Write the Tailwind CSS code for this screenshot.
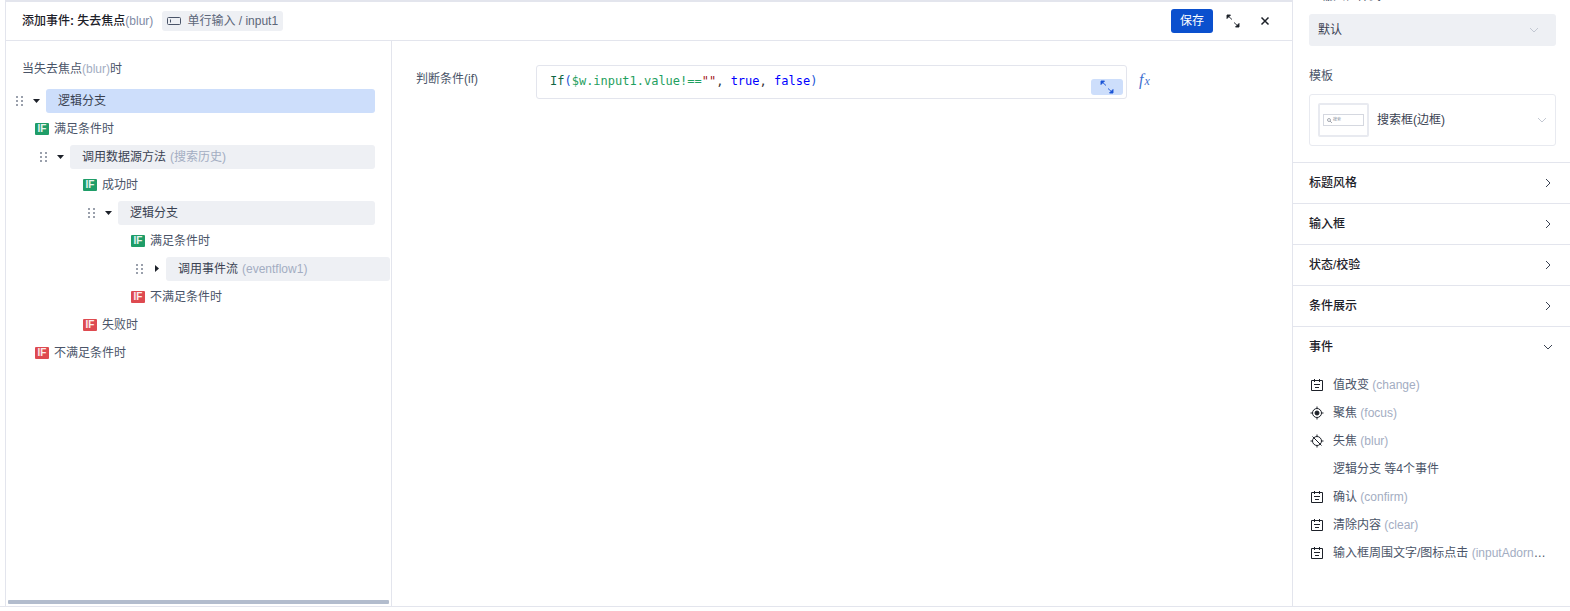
<!DOCTYPE html>
<html lang="zh">
<head>
<meta charset="utf-8">
<title>添加事件</title>
<script src="https://cdn.jsdelivr.net/npm/@tailwindcss/browser@4"></script>
</head>
<body class="bg-white overflow-hidden font-['Liberation_Sans','Noto_Sans_CJK_SC',sans-serif] text-[12px] text-[#1d2129]">
<div class="w-[1570px] h-[611px] flex flex-col overflow-hidden">
  <div class="flex-1 flex min-h-0 border-b border-[#e3e5ed]">
    <!-- Event editor -->
    <div class="w-[1293px] pl-[5px] shrink-0">
      <div class="h-full flex flex-col border-x border-t-2 border-[#e3e5ed]">
        <div class="h-[39px] shrink-0 flex items-center pl-[16px] pr-[20px] border-b border-[#e3e5ed]">
          <span class="font-medium text-[#1d2129]">添加事件<span class="font-bold">:</span> 失去焦点<span class="font-normal text-[#7f8ba5]">(blur)</span></span>
          <span class="ml-[9px] h-[20px] px-[5px] rounded-[3px] bg-[#eef0f4] flex items-center gap-[6px] text-[#5c6679]">
            <svg width="14" height="14" viewBox="0 0 14 14" fill="none" stroke="#4a5468"><rect x="0.5" y="3.5" width="13" height="7" rx="1"/><path d="M3.5 5.5v3"/></svg>
            单行输入 / input1
          </span>
          <button class="ml-auto w-[42px] h-[24px] rounded-[3px] bg-[#0b50ce] text-white">保存</button>
          <svg class="ml-[13px]" width="14" height="14" viewBox="0 0 14 14" fill="none" stroke="#1d2129" stroke-width="0.9"><path d="M1 1l5 4.500M1 1h3.500L1 4.500zM13 13L8 8.500M13 13H9.500L13 9.500z" fill="#1d2129"/></svg>
          <svg class="ml-[18px]" width="14" height="14" viewBox="0 0 14 14" fill="none" stroke="#1d2129" stroke-width="1.500"><path d="M3.500 3.500l7 7M10.500 3.500l-7 7"/></svg>
        </div>
        <div class="flex-1 flex min-h-0">
          <!-- Action tree -->
          <div class="w-[386px] shrink-0 border-r border-[#e3e5ed] relative">
            <div class="h-[46px] pl-[16px] pt-[10px] flex items-center text-[#4a5468]">当失去焦点<span class="text-[#a3adc2]">(blur)</span>时</div>
            <div class="flex flex-col">
              <div class="h-[28px] flex items-center pl-[10px]">
                <svg width="8" height="12" viewBox="0 0 8 12" fill="#9aa0ac"><rect x="0" y="1" width="2" height="2"/><rect x="5" y="1" width="2" height="2"/><rect x="0" y="5" width="2" height="2"/><rect x="5" y="5" width="2" height="2"/><rect x="0" y="9" width="2" height="2"/><rect x="5" y="9" width="2" height="2"/></svg>
                <svg class="ml-[8px]" width="10" height="10" viewBox="0 0 10 10" fill="#1d2129"><path d="M1 3h7L4.500 7z"/></svg>
                <div class="ml-[4px] w-[329px] h-[24px] rounded-[3px] bg-[#cddefb] pl-[12px] flex items-center text-[#3a4252]">逻辑分支</div>
              </div>
              <div class="h-[28px] flex items-center pl-[29px] gap-[5px] text-[#4a5468]"><span class="w-[14px] h-[12px] rounded-[1px] bg-[#1f9d68] text-white/90 text-[10px] leading-[12px] font-bold text-center">IF</span>满足条件时</div>
              <div class="h-[28px] flex items-center pl-[34px]">
                <svg width="8" height="12" viewBox="0 0 8 12" fill="#9aa0ac"><rect x="0" y="1" width="2" height="2"/><rect x="5" y="1" width="2" height="2"/><rect x="0" y="5" width="2" height="2"/><rect x="5" y="5" width="2" height="2"/><rect x="0" y="9" width="2" height="2"/><rect x="5" y="9" width="2" height="2"/></svg>
                <svg class="ml-[8px]" width="10" height="10" viewBox="0 0 10 10" fill="#1d2129"><path d="M1 3h7L4.500 7z"/></svg>
                <div class="ml-[4px] w-[305px] h-[24px] rounded-[3px] bg-[#eef0f4] pl-[12px] flex items-center text-[#3a4252]">调用数据源方法<span class="ml-[4px] text-[#a3adc2]">(搜索历史)</span></div>
              </div>
              <div class="h-[28px] flex items-center pl-[77px] gap-[5px] text-[#4a5468]"><span class="w-[14px] h-[12px] rounded-[1px] bg-[#1f9d68] text-white/90 text-[10px] leading-[12px] font-bold text-center">IF</span>成功时</div>
              <div class="h-[28px] flex items-center pl-[82px]">
                <svg width="8" height="12" viewBox="0 0 8 12" fill="#9aa0ac"><rect x="0" y="1" width="2" height="2"/><rect x="5" y="1" width="2" height="2"/><rect x="0" y="5" width="2" height="2"/><rect x="5" y="5" width="2" height="2"/><rect x="0" y="9" width="2" height="2"/><rect x="5" y="9" width="2" height="2"/></svg>
                <svg class="ml-[8px]" width="10" height="10" viewBox="0 0 10 10" fill="#1d2129"><path d="M1 3h7L4.500 7z"/></svg>
                <div class="ml-[4px] w-[257px] h-[24px] rounded-[3px] bg-[#eef0f4] pl-[12px] flex items-center text-[#3a4252]">逻辑分支</div>
              </div>
              <div class="h-[28px] flex items-center pl-[125px] gap-[5px] text-[#4a5468]"><span class="w-[14px] h-[12px] rounded-[1px] bg-[#1f9d68] text-white/90 text-[10px] leading-[12px] font-bold text-center">IF</span>满足条件时</div>
              <div class="h-[28px] flex items-center pl-[130px]">
                <svg width="8" height="12" viewBox="0 0 8 12" fill="#9aa0ac"><rect x="0" y="1" width="2" height="2"/><rect x="5" y="1" width="2" height="2"/><rect x="0" y="5" width="2" height="2"/><rect x="5" y="5" width="2" height="2"/><rect x="0" y="9" width="2" height="2"/><rect x="5" y="9" width="2" height="2"/></svg>
                <svg class="ml-[8px]" width="10" height="10" viewBox="0 0 10 10" fill="#1d2129"><path d="M3 1v7l4-3.500z"/></svg>
                <div class="ml-[4px] w-[224px] h-[24px] rounded-[3px] bg-[#eef0f4] pl-[12px] flex items-center text-[#3a4252]">调用事件流<span class="ml-[4px] text-[#a3adc2]">(eventflow1)</span></div>
              </div>
              <div class="h-[28px] flex items-center pl-[125px] gap-[5px] text-[#4a5468]"><span class="w-[14px] h-[12px] rounded-[1px] bg-[#de4a50] text-white/90 text-[10px] leading-[12px] font-bold text-center">IF</span>不满足条件时</div>
              <div class="h-[28px] flex items-center pl-[77px] gap-[5px] text-[#4a5468]"><span class="w-[14px] h-[12px] rounded-[1px] bg-[#de4a50] text-white/90 text-[10px] leading-[12px] font-bold text-center">IF</span>失败时</div>
              <div class="h-[28px] flex items-center pl-[29px] gap-[5px] text-[#4a5468]"><span class="w-[14px] h-[12px] rounded-[1px] bg-[#de4a50] text-white/90 text-[10px] leading-[12px] font-bold text-center">IF</span>不满足条件时</div>
            </div>
            <div class="absolute left-[2px] right-[2px] bottom-[2px] h-[4px] rounded-[1px] bg-[#b2bccd]"></div>
          </div>
          <!-- Condition -->
          <div class="flex-1 pt-[24px] pl-[24px] flex items-start">
            <span class="w-[120px] pt-[5px] text-[#4a5468]">判断条件(if)</span>
            <div class="relative w-[591px] h-[34px] border border-[#e3e5ed] rounded-[3px] pl-[13px] pb-[2px] flex items-center font-['DejaVu_Sans_Mono',monospace] text-[12px] whitespace-pre"><span class="text-[#116644]">If</span><span class="text-[#1a53d6]">(</span><span class="text-[#1fa060]">$w.input1.value!==</span><span class="text-[#a31515]">""</span><span class="text-[#333]">, </span><span class="text-[#0000ff]">true</span><span class="text-[#333]">, </span><span class="text-[#0000ff]">false</span><span class="text-[#1a53d6]">)</span>
              <span class="absolute right-[3px] bottom-[3px] w-[32px] h-[16px] rounded-[3px] bg-[#cddefb] flex items-center justify-center">
                <svg width="14" height="14" viewBox="0 0 14 14" fill="none" stroke="#1a53d6" stroke-width="0.9"><path d="M1 1l5 4.500M1 1h3.500L1 4.500zM13 13L8 8.500M13 13H9.500L13 9.500z" fill="#1a53d6"/></svg>
              </span>
            </div>
            <span class="ml-[12px] mt-[8px] font-['Liberation_Serif',serif] italic text-[16px] leading-[14px] text-[#3f6fd0]">f<span class="ml-[1px] text-[12px]">x</span></span>
          </div>
        </div>
      </div>
    </div>
    <!-- Property panel -->
    <div class="flex-1 min-w-0 relative">
      <div class="pl-[16px] pr-[14px]">
        <div class="h-[20px] -mt-[14px] pl-[12px] leading-[20px] text-[#4a5468]">输入框样式</div>
        <div class="mt-[8px] h-[32px] rounded-[3px] bg-[#eef0f4] pl-[9px] pr-[17px] flex items-center justify-between text-[#3a4252]">默认
          <svg width="10" height="6" viewBox="0 0 10 6" fill="none" stroke="#c3c8d2"><path d="M1 1l4 4 4-4"/></svg>
        </div>
        <div class="mt-[22px] text-[#4a5468] leading-[16px]">模板</div>
        <div class="mt-[10px] h-[52px] border border-[#e8eaf0] rounded-[3px] pl-[8px] pr-[8px] flex items-center">
          <div class="w-[51px] h-[34px] border-[2px] border-[#e8eaf0] rounded-[2px] flex items-center justify-center">
            <div class="w-[41px] h-[12px] border border-[#d5d8e0] flex items-center gap-[1px] pl-[3px] text-[4px] text-[#8a92a2]">
              <svg width="5" height="5" viewBox="0 0 5 5" fill="none" stroke="#6b7280" stroke-width="0.600"><circle cx="2" cy="2" r="1.500"/><path d="M3 3l2 2"/></svg>搜索
            </div>
          </div>
          <span class="ml-[8px] text-[#3a4252]">搜索框(边框)</span>
          <svg class="ml-auto" width="10" height="6" viewBox="0 0 10 6" fill="none" stroke="#c3c8d2"><path d="M1 1l4 4 4-4"/></svg>
        </div>
      </div>
      <div class="mt-[16px]">
        <div class="h-[41px] border-t border-[#e3e5ed] pl-[16px] pr-[19px] flex items-center justify-between font-medium">标题风格<svg width="6" height="10" viewBox="0 0 6 10" fill="none" stroke="#3a4252"><path d="M1 1l4 4-4 4"/></svg></div>
        <div class="h-[41px] border-t border-[#e3e5ed] pl-[16px] pr-[19px] flex items-center justify-between font-medium">输入框<svg width="6" height="10" viewBox="0 0 6 10" fill="none" stroke="#3a4252"><path d="M1 1l4 4-4 4"/></svg></div>
        <div class="h-[41px] border-t border-[#e3e5ed] pl-[16px] pr-[19px] flex items-center justify-between font-medium">状态/校验<svg width="6" height="10" viewBox="0 0 6 10" fill="none" stroke="#3a4252"><path d="M1 1l4 4-4 4"/></svg></div>
        <div class="h-[41px] border-t border-[#e3e5ed] pl-[16px] pr-[19px] flex items-center justify-between font-medium">条件展示<svg width="6" height="10" viewBox="0 0 6 10" fill="none" stroke="#3a4252"><path d="M1 1l4 4-4 4"/></svg></div>
        <div class="h-[41px] border-t border-[#e3e5ed] pl-[16px] pr-[17px] flex items-center justify-between font-medium">事件<svg width="10" height="6" viewBox="0 0 10 6" fill="none" stroke="#3a4252"><path d="M1 1l4 4 4-4"/></svg></div>
      </div>
      <div class="pl-[17px] mt-[4px] text-[#4a5468]">
        <div class="h-[28px] flex items-center gap-[9px]"><svg width="14" height="14" viewBox="0 0 14 14" fill="none" stroke="#1d2129"><path d="M1.500 2.500h11v10h-11zM4.500 1v3M9.500 1v3M4 6.500h6M5 9.500h4"/></svg><span>值改变 <span class="text-[#a3adc2]">(change)</span></span></div>
        <div class="h-[28px] flex items-center gap-[9px]"><svg width="14" height="14" viewBox="0 0 14 14" fill="none" stroke="#1d2129"><circle cx="7" cy="7" r="4.500"/><circle cx="7" cy="7" r="2" fill="#1d2129"/><path d="M7 .5v2M7 11.500v2M.5 7h2M11.500 7h2"/></svg><span>聚焦 <span class="text-[#a3adc2]">(focus)</span></span></div>
        <div class="h-[28px] flex items-center gap-[9px]"><svg width="14" height="14" viewBox="0 0 14 14" fill="none" stroke="#1d2129"><circle cx="7" cy="7" r="4.500"/><path d="M7 .5v2M7 11.500v2M.5 7h2M11.500 7h2M2.500 2.500l9 9"/></svg><span>失焦 <span class="text-[#a3adc2]">(blur)</span></span></div>
        <div class="h-[28px] flex items-center pl-[23px]">逻辑分支 等4个事件</div>
        <div class="h-[28px] flex items-center gap-[9px]"><svg width="14" height="14" viewBox="0 0 14 14" fill="none" stroke="#1d2129"><path d="M1.500 2.500h11v10h-11zM4.500 1v3M9.500 1v3M4 6.500h6M5 9.500h4"/></svg><span>确认 <span class="text-[#a3adc2]">(confirm)</span></span></div>
        <div class="h-[28px] flex items-center gap-[9px]"><svg width="14" height="14" viewBox="0 0 14 14" fill="none" stroke="#1d2129"><path d="M1.500 2.500h11v10h-11zM4.500 1v3M9.500 1v3M4 6.500h6M5 9.500h4"/></svg><span>清除内容 <span class="text-[#a3adc2]">(clear)</span></span></div>
        <div class="h-[28px] flex items-center gap-[9px]"><svg class="shrink-0" width="14" height="14" viewBox="0 0 14 14" fill="none" stroke="#1d2129"><path d="M1.500 2.500h11v10h-11zM4.500 1v3M9.500 1v3M4 6.500h6M5 9.500h4"/></svg><span class="truncate w-[215px]">输入框周围文字/图标点击 <span class="text-[#a3adc2]">(inputAdornmentClick)</span></span></div>
      </div>
    </div>
  </div>
  <div class="h-[4px] shrink-0"></div>
</div>
</body>
</html>
